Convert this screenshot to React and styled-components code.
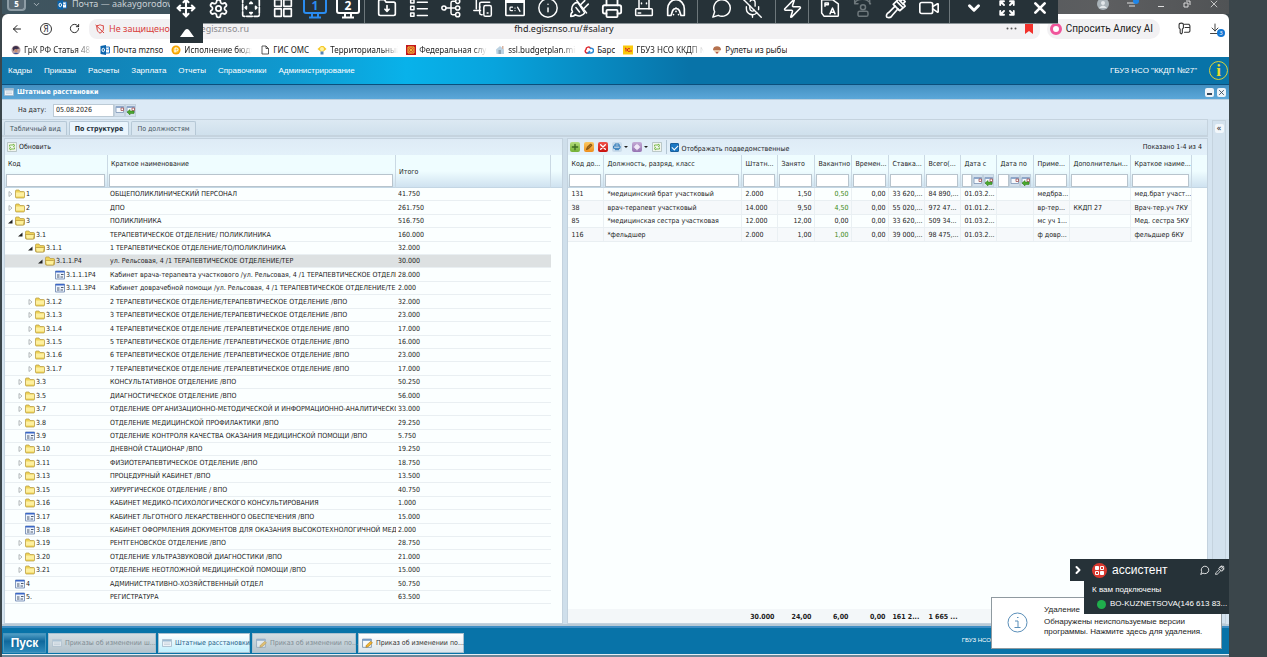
import React from "react";
import styled, { createGlobalStyle, css } from "styled-components";
import {
  LuMove,
  LuSettings,
  LuInfo,
  LuPrinter,
  LuMessageCircle,
  LuMicOff,
  LuZap,
  LuVideo,
  LuArrowLeft,
  LuRotateCw,
  LuChevronDown,
  LuChevronRight,
} from "react-icons/lu";

const ui = '"DejaVu Sans Condensed", "DejaVu Sans", sans-serif';
const arial = '"Liberation Sans", Arial, sans-serif';
const noto = '"Noto Sans", sans-serif';

const bookmarks = [
  { text: "ГрК РФ Статья 48.", kind: "coat" },
  { text: "Почта mznso", kind: "outlook" },
  { text: "Исполнение бюдж", kind: "coin" },
  { text: "ГИС ОМС", kind: "page" },
  { text: "Территориальный", kind: "bulb" },
  { text: "Федеральная служ", kind: "emblem" },
  { text: "ssl.budgetplan.min", kind: "house" },
  { text: "Барс", kind: "cloud" },
  { text: "ГБУЗ НСО ККДП №", kind: "onec" },
  { text: "Рулеты из рыбы", kind: "cook" },
];

const menu = [
  "Кадры",
  "Приказы",
  "Расчеты",
  "Зарплата",
  "Отчеты",
  "Справочники",
  "Администрирование",
];

const tree = [
  { level: 0, kind: "closed", code: "1", name: "ОБЩЕПОЛИКЛИНИЧЕСКИЙ ПЕРСОНАЛ", total: "41.750" },
  { level: 0, kind: "closed", code: "2", name: "ДПО", total: "261.750" },
  { level: 0, kind: "open", code: "3", name: "ПОЛИКЛИНИКА", total: "516.750" },
  { level: 1, kind: "open", code: "3.1", name: "ТЕРАПЕВТИЧЕСКОЕ ОТДЕЛЕНИЕ/ ПОЛИКЛИНИКА", total: "160.000" },
  { level: 2, kind: "open", code: "3.1.1", name: "1 ТЕРАПЕВТИЧЕСКОЕ ОТДЕЛЕНИЕ/ТО/ПОЛИКЛИНИКА", total: "32.000" },
  { level: 3, kind: "open", code: "3.1.1.Р4", name: "ул. Рельсовая, 4 /1 ТЕРАПЕВТИЧЕСКОЕ ОТДЕЛЕНИЕ/ТЕР", total: "30.000", selected: true },
  { level: 4, kind: "leaf", code: "3.1.1.1Р4", name: "Кабинет врача-терапевта участкового /ул. Рельсовая, 4 /1 ТЕРАПЕВТИЧЕСКОЕ ОТДЕЛЕ", total: "28.000" },
  { level: 4, kind: "leaf", code: "3.1.1.3Р4", name: "Кабинет доврачебной помощи /ул. Рельсовая, 4 /1 ТЕРАПЕВТИЧЕСКОЕ ОТДЕЛЕНИЕ/ТЕ", total: "2.000" },
  { level: 2, kind: "closed", code: "3.1.2", name: "2 ТЕРАПЕВТИЧЕСКОЕ ОТДЕЛЕНИЕ/ТЕРАПЕВТИЧЕСКОЕ ОТДЕЛЕНИЕ /ВПО", total: "32.000" },
  { level: 2, kind: "closed", code: "3.1.3", name: "3 ТЕРАПЕВТИЧЕСКОЕ ОТДЕЛЕНИЕ/ТЕРАПЕВТИЧЕСКОЕ ОТДЕЛЕНИЕ /ВПО", total: "23.000" },
  { level: 2, kind: "closed", code: "3.1.4", name: "4 ТЕРАПЕВТИЧЕСКОЕ ОТДЕЛЕНИЕ /ТЕРАПЕВТИЧЕСКОЕ ОТДЕЛЕНИЕ /ВПО", total: "17.000" },
  { level: 2, kind: "closed", code: "3.1.5", name: "5 ТЕРАПЕВТИЧЕСКОЕ ОТДЕЛЕНИЕ /ТЕРАПЕВТИЧЕСКОЕ ОТДЕЛЕНИЕ /ВПО", total: "16.000" },
  { level: 2, kind: "closed", code: "3.1.6", name: "6 ТЕРАПЕВТИЧЕСКОЕ ОТДЕЛЕНИЕ /ТЕРАПЕВТИЧЕСКОЕ ОТДЕЛЕНИЕ /ВПО", total: "23.000" },
  { level: 2, kind: "closed", code: "3.1.7", name: "7 ТЕРАПЕВТИЧЕСКОЕ ОТДЕЛЕНИЕ /ТЕРАПЕВТИЧЕСКОЕ ОТДЕЛЕНИЕ /ВПО", total: "17.000" },
  { level: 1, kind: "closed", code: "3.3", name: "КОНСУЛЬТАТИВНОЕ ОТДЕЛЕНИЕ /ВПО", total: "50.250" },
  { level: 1, kind: "closed", code: "3.5", name: "ДИАГНОСТИЧЕСКОЕ ОТДЕЛЕНИЕ /ВПО", total: "56.000" },
  { level: 1, kind: "closed", code: "3.7", name: "ОТДЕЛЕНИЕ ОРГАНИЗАЦИОННО-МЕТОДИЧЕСКОЙ И ИНФОРМАЦИОННО-АНАЛИТИЧЕСКО", total: "33.000" },
  { level: 1, kind: "closed", code: "3.8", name: "ОТДЕЛЕНИЕ МЕДИЦИНСКОЙ ПРОФИЛАКТИКИ /ВПО", total: "29.250" },
  { level: 1, kind: "leaf", code: "3.9", name: "ОТДЕЛЕНИЕ КОНТРОЛЯ КАЧЕСТВА ОКАЗАНИЯ МЕДИЦИНСКОЙ ПОМОЩИ /ВПО", total: "5.750" },
  { level: 1, kind: "closed", code: "3.10", name: "ДНЕВНОЙ СТАЦИОНАР /ВПО", total: "19.250" },
  { level: 1, kind: "closed", code: "3.11", name: "ФИЗИОТЕРАПЕВТИЧЕСКОЕ ОТДЕЛЕНИЕ /ВПО", total: "18.750" },
  { level: 1, kind: "closed", code: "3.13", name: "ПРОЦЕДУРНЫЙ КАБИНЕТ /ВПО", total: "13.500" },
  { level: 1, kind: "closed", code: "3.15", name: "ХИРУРГИЧЕСКОЕ ОТДЕЛЕНИЕ / ВПО", total: "40.750" },
  { level: 1, kind: "closed", code: "3.16", name: "КАБИНЕТ МЕДИКО-ПСИХОЛОГИЧЕСКОГО КОНСУЛЬТИРОВАНИЯ", total: "1.000" },
  { level: 1, kind: "leaf", code: "3.17", name: "КАБИНЕТ ЛЬГОТНОГО ЛЕКАРСТВЕННОГО ОБЕСПЕЧЕНИЯ /ВПО", total: "15.000" },
  { level: 1, kind: "leaf", code: "3.18", name: "КАБИНЕТ ОФОРМЛЕНИЯ ДОКУМЕНТОВ ДЛЯ ОКАЗАНИЯ ВЫСОКОТЕХНОЛОГИЧНОЙ МЕД", total: "2.000" },
  { level: 1, kind: "closed", code: "3.19", name: "РЕНТГЕНОВСКОЕ ОТДЕЛЕНИЕ /ВПО", total: "28.750" },
  { level: 1, kind: "closed", code: "3.20", name: "ОТДЕЛЕНИЕ УЛЬТРАЗВУКОВОЙ ДИАГНОСТИКИ /ВПО", total: "21.000" },
  { level: 1, kind: "closed", code: "3.21", name: "ОТДЕЛЕНИЕ НЕОТЛОЖНОЙ МЕДИЦИНСКОЙ ПОМОЩИ /ВПО", total: "15.000" },
  { level: 0, kind: "leaf", code: "4", name: "АДМИНИСТРАТИВНО-ХОЗЯЙСТВЕННЫЙ ОТДЕЛ", total: "50.750" },
  { level: 0, kind: "leaf", code: "5.", name: "РЕГИСТРАТУРА", total: "63.500" },
];

const columns = [
  { title: "Код до...", width: 36 },
  { title: "Должность, разряд, класс", width: 138 },
  { title: "Штатн...", width: 36 },
  { title: "Занято", width: 37, right: true },
  { title: "Вакантно", width: 37, right: true },
  { title: "Времен...", width: 37, right: true },
  { title: "Ставка...", width: 36 },
  { title: "Всего(...", width: 36 },
  { title: "Дата с", width: 36, date: true },
  { title: "Дата по", width: 37, date: true },
  { title: "Приме...", width: 36 },
  { title: "Дополнительн...", width: 61 },
  { title: "Краткое наиме...", width: 61 },
];

const staff = [
  ["131", "*медицинский брат участковый", "2.000", "1,50", "0,50", "0,00", "33 620,...", "84 890,...", "01.03.2...", "", "медбра...", "", "мед.брат участ..."],
  ["38", "врач-терапевт участковый", "14.000", "9,50", "4,50", "0,00", "55 020,...", "972 47...", "01.01.2...", "", "вр-тер...", "ККДП 27", "Врач-тер.уч 7КУ"],
  ["85", "*медицинская сестра участковая", "12.000", "12,00", "0,00", "0,00", "33 620,...", "509 34...", "01.03.2...", "", "мс уч 1...", "", "Мед. сестра 5КУ"],
  ["116", "*фельдшер", "2.000", "1,00", "1,00", "0,00", "39 000,...", "98 475,...", "01.03.2...", "", "ф довр...", "", "фельдшер 6КУ"],
];

const totals = ["", "", "30.000", "24,00", "6,00", "0,00", "161 2...", "1 665 ...", "", "", "", "", ""];

const tasks = [
  { text: "Приказы об изменении ш...", state: "dim", icon: "window", width: 108 },
  { text: "Штатные расстановки", state: "active", icon: "window", width: 92 },
  { text: "Приказ об изменении по...", state: "dim", icon: "edit", width: 104 },
  { text: "Приказ об изменении по...", state: "plain", icon: "edit", width: 106 },
];

/* ---------- icons ---------- */

const Stroke = ({ size = 20, color = "#fff", width = 2, children }) => (
  <svg
    width={size}
    height={size}
    viewBox="0 0 24 24"
    fill="none"
    stroke={color}
    strokeWidth={width}
    strokeLinecap="round"
    strokeLinejoin="round"
    aria-hidden="true"
  >
    {children}
  </svg>
);

const FitIcon = () => (
  <Stroke>
    <rect x="2" y="1" width="20" height="21" rx="2" strokeDasharray="7 2" />
    <path d="M10.500 6.500 12 5l1.500 1.500zM10.500 17.500 12 19l1.500-1.500zM6.500 10 5 11.500 6.500 13zM17.500 10l1.500 1.500-1.500 1.500z" />
  </Stroke>
);

const TilesIcon = () => (
  <Stroke>
    <rect x="2" y="2" width="8" height="8" />
    <rect x="13" y="2" width="9" height="8" />
    <rect x="2" y="13" width="8" height="9" />
    <rect x="13" y="13" width="9" height="9" />
  </Stroke>
);

const MonitorIcon = ({ n, color }) => (
  <svg width="24" height="22" viewBox="0 0 24 22" fill="none" stroke={color} strokeWidth="2">
    <rect x="1" y="1" width="22" height="15" rx="2" />
    <path d="M9 16v4M15 16v4M6 20.500h12" />
    <text x="12" y="13" textAnchor="middle" fill={color} stroke="none" fontSize="12" fontWeight="700" fontFamily="Noto Sans">
      {n}
    </text>
  </svg>
);

const FolderDownIcon = () => (
  <Stroke>
    <path d="M2 4a2 2 0 0 1 2-2h5l2 3h9a2 2 0 0 1 2 2v12a2 2 0 0 1-2 2H4a2 2 0 0 1-2-2z" />
    <path d="M12 9v7M9.500 13.500 12 16l2.500-2.500" />
  </Stroke>
);

const ListIcon = () => (
  <Stroke width={1.8}>
    <rect x="2" y="2" width="4" height="4" />
    <rect x="2" y="10" width="4" height="4" />
    <rect x="2" y="18" width="4" height="4" />
    <path d="M10 5h12M10 13h12M10 21h12" />
  </Stroke>
);

const TreeIcon = () => (
  <Stroke width={1.8}>
    <circle cx="3.500" cy="12" r="2.500" />
    <circle cx="20" cy="4" r="2.500" />
    <circle cx="20" cy="12" r="2.500" />
    <circle cx="20" cy="20" r="2.500" />
    <path d="M6 12h11M17 4h-3a2 2 0 0 0-2 2v12a2 2 0 0 0 2 2h3" />
  </Stroke>
);

const DevicesIcon = () => (
  <Stroke width={1.8}>
    <path d="M4 2v11M1 15h8" />
    <path d="M8 12V7a2 2 0 0 1 2-2h10" />
    <rect x="13" y="9" width="9" height="13" rx="2" />
    <path d="M8 10v8a2 2 0 0 0 2 2h1M17 18h1" />
  </Stroke>
);

const ConsoleIcon = () => (
  <Stroke>
    <rect x="1" y="2" width="22" height="19" rx="1" />
    <path d="M1 4h22" strokeWidth="4" />
    <path d="M9 11H7a1 1 0 0 0-1 1v2a1 1 0 0 0 1 1h2M12 12v.1M12 15v.1M15 11l3 5" strokeWidth="1.500" />
  </Stroke>
);

const PlugIcon = () => (
  <Stroke width={1.8} size={21}>
    <path d="M10 5c-4 0-7 4-7 8 0 1 1 2 1 3-2 1-2 3-2 5 2 0 4 0 5-2 4 3 9 1 11-2z" />
    <path d="m9 3 11 14M13 8l5-5M17 12l5-5M8 11l4 5" />
  </Stroke>
);

const UsbIcon = () => (
  <Stroke width={1.8}>
    <path d="M6 13V1h12v12M9 6v1M15 6v1" />
    <rect x="2" y="13" width="20" height="8" rx="1" />
    <path d="M5 18h3" />
  </Stroke>
);

const ArchIcon = () => (
  <Stroke>
    <path d="M2 21V13a10 11 0 0 1 20 0v8h-4l-2-6a4.500 4.500 0 0 0-8 0l-2 6z" />
    <path d="M12 12v.1M12 16v.1M9 20v.1M15 20v.1" />
  </Stroke>
);

const TranslateIcon = () => (
  <Stroke width={1.8}>
    <path d="M2 3a1 1 0 0 1 1-1h12l7 5v14a1 1 0 0 1-1 1H5l-3-4z" />
    <path d="M6 10V6h4v2H6M12 19l3-7 3 7M13 17h4" />
  </Stroke>
);

const UserTurnIcon = () => (
  <Stroke color="#6d777b" width={1.8}>
    <circle cx="12" cy="11" r="3" />
    <rect x="6" y="16" width="12" height="6" rx="2" />
    <path d="M2 3v4h4M2 6c4-6 15-6 19 1M20 3v4" />
  </Stroke>
);

const ToolsIcon = ({ size = 22 }) => (
  <Stroke size={size} width={1.8}>
    <path d="M2 22c-1-2 0-4 2-5l7-7-2-2 6-6 3 2 1-2 3 3-2 2 2 3-6 5-2-2-6 7c-1 2-3 3-6 2z" />
    <path d="m11 10 4 4M13 5l6 6M15 3l5 5" />
  </Stroke>
);

const ExpandIcon = () => (
  <Stroke size={18} width={2.5}>
    <path d="M3 8V3h5M3 3l5 5M21 8V3h-5M21 3l-5 5M3 16v5h5M3 21l5-5M21 16v5h-5M21 21l-5-5" />
  </Stroke>
);

const CrossIcon = ({ size = 16, color = "#fff", width = 4 }) => (
  <Stroke size={size} color={color} width={width}>
    <path d="m5 5 14 14M19 5 5 19" />
  </Stroke>
);

const Folder = ({ open }) => (
  <svg width="10" height="10" viewBox="0 0 20 20" aria-hidden="true">
    <path d="M1 4q0-2 2-2h5l2 3h7q2 0 2 2v9q0 2-2 2H3q-2 0-2-2z" fill="#f0d458" stroke="#b5983e" strokeWidth="1.400" />
    {open ? (
      <path d="M1 9h15l3-1-2 9q0 1-2 1H4q-2 0-2-2z" fill="#fdf09a" stroke="#a8862a" strokeWidth="1.200" />
    ) : (
      <path d="M2 7h16v8H2z" fill="#fdf0a0" />
    )}
  </svg>
);

const Leaf = () => (
  <svg width="10" height="10" viewBox="0 0 20 20" aria-hidden="true">
    <path d="M1 2h18v16H1z" fill="#eef4fc" stroke="#8399bd" strokeWidth="2" />
    <path d="M1 2h18v3H1z" fill="#3c68c8" />
    <path d="M4 10h5M4 14h5M12 9h5M11 14h5" stroke="#4a5a70" strokeWidth="2" />
  </svg>
);

const Calendar = ({ back }) => (
  <svg width="10" height="10" viewBox="0 0 20 20" aria-hidden="true">
    <path d="M2 3h15v12H2z" fill="#f6f9fd" stroke="#7b94b5" strokeWidth="1.600" />
    <path d="M2 3h15v3H2z" fill="#8ea9cc" />
    <path d="M12 6h5v5h-5z" fill="#fff" stroke="#a04848" strokeWidth="1.500" />
    {back && <path d="m2 14 6-5v3h8v5H8v3z" fill="#4ba82e" stroke="#2f7a18" />}
  </svg>
);

const Refresh = () => (
  <svg width="10" height="10" viewBox="0 0 20 20" fill="none" aria-hidden="true">
    <path d="M1 1h18v18H1z" fill="#f1f5ee" stroke="#aab8b8" strokeWidth="1.500" />
    <path d="M5 9V6h8l-1-2 4 3-4 3M15 11v3H7l1 2-4-3 4-3" stroke="#7cbb4e" strokeWidth="2" />
  </svg>
);

const WindowIcon = () => (
  <svg width="10" height="10" viewBox="0 0 20 20" aria-hidden="true">
    <path d="M1 3h18v14H1z" fill="#eef3f8" stroke="#9fb4c6" strokeWidth="1.500" />
    <path d="M2 4h16v3H2z" fill="#9dbad2" />
    <path d="M4 10h12M4 13h12" stroke="#c3cfd9" strokeWidth="1.500" />
  </svg>
);

const EditIcon = () => (
  <svg width="11" height="11" viewBox="0 0 20 20" aria-hidden="true">
    <path d="M1 2h16v15H1z" fill="#f7fafc" stroke="#7590ad" strokeWidth="1.500" />
    <path d="M1 2h16v3H1z" fill="#6c93c2" />
    <path d="m7 17 1-4 8-7 3 3-8 7z" fill="#f2b632" stroke="#a36f12" />
  </svg>
);

const Favicon = ({ kind }) => (
  <svg width="10" height="10" viewBox="0 0 20 20" aria-hidden="true">
    {kind === "coat" && (
      <>
        <circle cx="10" cy="10" r="9" fill="#b9a0a4" />
        <path d="M3 7c3-7 12-6 14 1l-3-1-3 3-3-2-3 4z" fill="#3b2f4a" />
        <circle cx="10" cy="11" r="3" fill="#c98c6a" />
        <path d="M5 18q5-5 10 0z" fill="#38529b" />
      </>
    )}
    {kind === "outlook" && (
      <>
        <path d="M10 4h9v12h-9z" fill="#fff" stroke="#1f72c0" strokeWidth="2" />
        <path d="m10 6 5 4 4-4" fill="none" stroke="#1f72c0" strokeWidth="1.500" />
        <path d="M1 2 12 0v20L1 18z" fill="#0a64ad" />
        <ellipse cx="6.500" cy="10" rx="2.500" ry="3.500" fill="none" stroke="#fff" strokeWidth="2" />
      </>
    )}
    {kind === "coin" && (
      <>
        <circle cx="10" cy="10" r="9" fill="#f5a300" />
        <circle cx="10" cy="10" r="6" fill="#ffc42e" />
        <path d="M8 15V6h3a3 3 0 0 1 0 6H7" fill="none" stroke="#fff" strokeWidth="2" />
      </>
    )}
    {kind === "page" && (
      <path d="M4 2h8l5 5v11H4zM12 2v5h5" fill="none" stroke="#333" strokeWidth="1.600" />
    )}
    {kind === "bulb" && (
      <>
        <path d="M1 8 8 2h5l6 6-6 5H7z" fill="#f6c929" />
        <circle cx="10" cy="8" r="4" fill="#fff2a0" />
        <path d="M7 13h6v6H7z" fill="#5582b5" />
      </>
    )}
    {kind === "emblem" && (
      <>
        <path d="M0 0h20v20H0z" fill="#c3161c" />
        <path d="M4 4h12v12H4z" fill="none" stroke="#f5c93c" strokeWidth="2" />
        <path d="M10 3v14M4 10h12M6 6l8 8M14 6l-8 8" stroke="#f5c93c" strokeWidth="1.500" />
      </>
    )}
    {kind === "house" && (
      <>
        <path d="m2 9 8-7 8 7v9H3z" fill="#bcd2e2" />
        <path d="M7 10h5v8H7z" fill="#8fa4b4" />
        <path d="M14 2h3v6h-3z" fill="#d8b2a0" />
      </>
    )}
    {kind === "cloud" && (
      <>
        <path d="M10 16H5a4 4 0 0 1-1-7c0-5 7-7 9-2" fill="none" stroke="#e0282e" strokeWidth="3" />
        <path d="M12 7c4-2 7 1 7 4s-2 5-5 5H8l4-4" fill="none" stroke="#2b8ad6" strokeWidth="3" />
      </>
    )}
    {kind === "onec" && (
      <>
        <path d="M0 1h20v18H0z" fill="#fbc90d" />
        <path d="m4 7 2-1v7M14 8a3 3 0 1 0 0 4h4" fill="none" stroke="#d6281e" strokeWidth="2" />
      </>
    )}
    {kind === "cook" && (
      <>
        <path d="M2 9c0-9 16-9 16 0 0 2-3 2-4 2H5c-2 0-3-1-3-2z" fill="#b5714e" />
        <path d="M5 10h10v4q-5 7-10 0z" fill="#e9c8a8" />
        <path d="M8 15q2 2 4 0" stroke="#a5322c" fill="none" strokeWidth="2" />
      </>
    )}
  </svg>
);

/* ---------- page ---------- */

const GlobalStyle = createGlobalStyle`
  * {
    box-sizing: border-box;
  }
  body {
    margin: 0;
    background: #3b464b;
    overflow: hidden;
  }
  button, input {
    margin: 0;
    padding: 0;
    border: 0;
    background: none;
    color: inherit;
    font: inherit;
  }
  a {
    color: inherit;
    text-decoration: none;
  }
  svg {
    display: block;
    flex: none;
  }
`;

const Screen = styled.div`
  position: relative;
  display: flex;
  flex-direction: column;
  min-height: 100vh;
  padding: 0 38px 0 2px;
  background: #3b464b;
  font-family: ${ui};
  font-size: 7px;
  line-height: 12px;
  color: #1c1c1c;
`;

const TitleStrip = styled.div`
  display: flex;
  align-items: flex-start;
  height: 14px;
  overflow: hidden;
  background: linear-gradient(90deg, #3f5560, #3c4a52 50%, #5d5e60 90%, #505355);
  color: #c9d1d5;
  font-family: ${noto};
  font-size: 9px;
  line-height: 8px;
`;

const TabCount = styled.span`
  width: 19px;
  height: 11px;
  margin-left: 5px;
  border-radius: 0 0 4px 4px;
  border: 2px solid #8d9ca5;
  border-top: 0;
  background: #596a75;
  color: #fff;
  font-weight: 700;
  font-size: 8px;
  line-height: 7px;
  text-align: center;
`;

const TabTitle = styled.span`
  display: flex;
  gap: 5px;
  margin-left: 16px;
`;

const TabArrow = styled.span`
  margin-left: 6px;
  height: 8px;
`;

const WindowButtons = styled.div`
  display: flex;
  align-items: center;
  gap: 18px;
  height: 8px;
  margin-left: auto;
  padding-right: 10px;
`;

const AddressRow = styled.div`
  display: flex;
  align-items: center;
  height: 29px;
  padding: 0 8px 0 9px;
  border-radius: 6px 6px 0 0;
  background: #fff;
  font-family: ${noto};
  font-size: 9px;
`;

const NavButtons = styled.div`
  display: flex;
  align-items: center;
  justify-content: space-between;
  width: 69px;
  margin-right: 9px;
`;

const RoundLetter = styled.span`
  display: grid;
  place-items: center;
  width: 12px;
  height: 12px;
  border: 1px solid #333;
  border-radius: 50%;
  font-size: 8px;
  line-height: 8px;
`;

const AddressPill = styled.div`
  flex: 1;
  display: grid;
  grid-template-columns: 1fr auto 1fr;
  align-items: center;
  height: 20px;
  padding: 0 7px 0 6px;
  border-radius: 8px;
  background: #f2f1f3;
`;

const Insecure = styled.div`
  display: flex;
  align-items: center;
  gap: 4px;
  color: #d9413d;
`;

const Domain = styled.span`
  margin-left: 10px;
  color: #8a8a8e;
`;

const PillEnd = styled.div`
  display: flex;
  align-items: center;
  justify-content: flex-end;
  gap: 8px;
`;

const AliceButton = styled.button`
  display: flex;
  align-items: center;
  gap: 4px;
  height: 20px;
  margin: 0 18px 0 7px;
  padding: 0 7px 0 3px;
  border-radius: 10px;
  background: #f2f1f3;
  font-family: Roboto, sans-serif;
  font-size: 10px;
`;

const Ring = styled.span`
  width: 12px;
  height: 12px;
  border: 3px solid #f0559b;
  border-radius: 50%;
  background: #fff;
`;

const Download = styled.div`
  position: relative;
  margin-left: 18px;
`;

const Badge = styled.span`
  position: absolute;
  right: -4px;
  bottom: -2px;
  width: 8px;
  height: 8px;
  border-radius: 50%;
  background: #1376d3;
  color: #fff;
  font-size: 6px;
  line-height: 8px;
  text-align: center;
`;

const Bookmarks = styled.nav`
  display: flex;
  gap: 8px;
  height: 14px;
  padding-left: 9px;
  background: #fff;
  font-family: ${noto};
  font-size: 8px;
  line-height: 14px;
`;

const Bookmark = styled.a`
  display: flex;
  align-items: center;
  gap: 3px;
  white-space: nowrap;
  & > span {
    max-width: 68px;
    overflow: hidden;
    ${({ $fade }) => $fade && "mask-image: linear-gradient(90deg, #000 54px, transparent 68px);"}
  }
`;

const AppHeader = styled.header`
  display: flex;
  align-items: center;
  height: 28px;
  padding: 0 1px 0 6px;
  border-bottom: 1px solid #0b4f7c;
  background: linear-gradient(90deg, #1378ab, #0f9ad0 24%, #08b2ea 33%, #08a4dd 40%, #0873a8 56%, #0873a8);
  color: #fff;
  font-family: ${arial};
  font-size: 8px;
`;

const Menu = styled.nav`
  display: flex;
  gap: 12px;
`;

const OrgName = styled.span`
  margin-left: auto;
`;

const InfoMark = styled.button`
  width: 19px;
  height: 19px;
  margin-left: 12px;
  border: 1px solid #d8d23c;
  border-radius: 50%;
  color: #e9dc2e;
  font: 700 17px/16px "Liberation Serif", serif;
`;

const WindowBar = styled.div`
  display: flex;
  align-items: center;
  gap: 3px;
  height: 15px;
  padding: 0 3px 0 2px;
  border-bottom: 1px solid #b9cfe0;
  background: linear-gradient(#4390c1, #5ba7d9);
  color: #fff;
  font-weight: 700;
`;

const WindowTool = styled.button`
  display: grid;
  place-items: center;
  width: 9px;
  height: 9px;
  border-radius: 2px;
  background: #edf3f8;
  color: #33475a;
  &:first-of-type {
    margin-left: auto;
  }
`;

const DateBar = styled.div`
  display: flex;
  align-items: center;
  height: 19px;
  padding: 1px 0 0 16px;
  background: #dceaf6;
`;

const DateLabel = styled.label`
  width: 30px;
`;

const DateInput = styled.input`
  width: 61px;
  height: 13px;
  margin-left: 5px;
  padding-left: 2px;
  border: 1px solid #bccad5;
  background: #fff;
`;

const IconButton = styled.button`
  display: grid;
  place-items: center;
  width: 11px;
  height: 13px;
  background: #d3e0ec;
  border: 1px solid #c1d0dd;
`;

const Workspace = styled.main`
  flex: 1;
  display: flex;
  background: #d5e4f0;
  border-bottom: 2px solid #b9cad6;
`;

const Center = styled.div`
  flex: 1;
  min-width: 0;
  display: flex;
  flex-direction: column;
`;

const Tabs = styled.div`
  display: flex;
  align-items: flex-end;
  gap: 2px;
  height: 18px;
  padding-left: 2px;
  border: solid #c5d3de;
  border-width: 1px 1px 2px 0;
  background: linear-gradient(#dce9f3, #cfe0ec);
`;

const Tab = styled.button`
  height: 14px;
  padding: 0 5px;
  border: 1px solid #b6c8d6;
  border-bottom: 0;
  border-radius: 2px 2px 0 0;
  background: #d9e6f0;
  color: #46555f;
  ${({ $on }) =>
    $on &&
    css`
      background: #eaf5fd;
      color: #22303a;
      font-weight: 700;
    `}
`;

const Panels = styled.div`
  flex: 1;
  display: grid;
  grid-template-columns: minmax(0, 559fr) 4px minmax(0, 640fr);
  padding: 1px 0 0 2px;
`;

const Panel = styled.section`
  display: flex;
  flex-direction: column;
  border: 1px solid #c3d2de;
  background: #fbffff;
`;

const Splitter = styled.div`
  background: #cfdfeb;
`;

const PanelBar = styled.div`
  display: flex;
  align-items: center;
  gap: 4px;
  height: 16px;
  padding: 0 5px 0 2px;
  background: linear-gradient(#deebf6, #e3f1fa);
`;

const TextButton = styled.button`
  display: flex;
  align-items: center;
  gap: 2px;
`;

const ToolButton = styled.button`
  display: flex;
  align-items: center;
  gap: 2px;
  & > span {
    display: grid;
    place-items: center;
    width: 10px;
    height: 10px;
    border-radius: 2px;
    background: ${({ $bg }) => $bg};
  }
  & > i {
    border: 2px solid transparent;
    border-top-color: #222;
    border-bottom: 0;
  }
`;

const CheckLabel = styled.label`
  display: flex;
  align-items: center;
  gap: 2px;
  padding-left: 3px;
  border-left: 1px solid #b4c6d4;
  line-height: 10px;
  & > span {
    padding-top: 4px;
  }
`;

const Check = styled.input`
  appearance: none;
  width: 9px;
  height: 9px;
  border: 1px solid #1a5f9c;
  border-radius: 1px;
  background: #1b78c4;
  &::after {
    content: "";
    display: block;
    width: 3px;
    height: 5px;
    margin: 0 auto;
    border: solid #fff;
    border-width: 0 1px 1px 0;
    transform: rotate(45deg);
  }
`;

const Counter = styled.span`
  margin-left: auto;
`;

const Table = styled.table`
  width: 100%;
  table-layout: fixed;
  border-collapse: separate;
  border-spacing: 0;
`;

const Th = styled.th`
  height: 33px;
  padding: ${({ $plain }) => ($plain ? "2px 3px 0" : "2px 2px 0 1px")};
  border-right: 1px solid #cad9e4;
  border-bottom: 1px solid #c3d6e4;
  background: linear-gradient(#effdff 50%, #cfe2f0);
  font-weight: 400;
  text-align: left;
  vertical-align: ${({ $plain }) => ($plain ? "middle" : "top")};
  overflow: hidden;
  white-space: nowrap;
  &:last-child {
    border-right: 0;
  }
`;

const ThLabel = styled.span`
  display: block;
  height: 17px;
  padding-left: 2px;
  line-height: 14px;
`;

const Filter = styled.span`
  display: flex;
  & > input {
    flex: 1;
    min-width: 0;
    height: 13px;
    border: 1px solid #b8c4cd;
    background: #fff;
  }
`;

const Row = styled.tr`
  & > td {
    height: 13px;
    padding: 0 0 0 2px;
    border-bottom: 1px solid #e9eff2;
    background: ${({ $selected }) => ($selected ? "#dde1e2" : "#fbffff")};
    overflow: hidden;
    white-space: nowrap;
  }
  &:nth-child(7n + 2) > td,
  &:nth-child(7n + 4) > td,
  &:nth-child(7n) > td {
    height: 14px;
  }
`;

const StaffRow = styled(Row)`
  & > td {
    padding: 0 3px;
    border-right: 1px solid #eaf0f3;
  }
  &:nth-child(even) > td {
    background: #f6f9fb;
  }
  & > td:last-child {
    border-right: 0;
    border-bottom-color: #fbffff;
    background: #fbffff;
  }
`;

const Cell = styled.td`
  text-align: ${({ $right }) => ($right ? "right" : "left")};
  color: ${({ $green }) => ($green ? "#3c8a17" : "inherit")};
`;

const Node = styled.span`
  display: flex;
  align-items: center;
  height: 12px;
  padding-left: ${({ $level }) => $level * 10}px;
`;

const Toggle = styled.span`
  display: grid;
  place-items: center;
  width: 7px;
  margin-right: 1px;
`;

const NodeCode = styled.span`
  padding-left: 1px;
`;

const Totals = styled.div`
  margin-top: auto;
  background: #f3f7f9;
  font-weight: 700;
  & td {
    height: 14px;
    padding: 2px 4px 0 3px;
    line-height: 10px;
    overflow: hidden;
    white-space: nowrap;
  }
`;

const SideStrip = styled.aside`
  display: flex;
  justify-content: center;
  align-items: flex-start;
  width: 14px;
  margin: 1px 3px 0 4px;
  padding-top: 3px;
  border: 1px solid #c5d3de;
  background: #d3e2ee;
`;

const CollapseButton = styled.button`
  width: 9px;
  height: 9px;
  border-radius: 2px;
  background: #f2f7fb;
  font-size: 9px;
  line-height: 7px;
`;

const TaskBar = styled.footer`
  display: flex;
  gap: 2px;
  height: 28px;
  padding: 5px 2px 1px 1px;
  border-top: 2px solid #3c8dc4;
  background: #0873a8;
`;

const StartButton = styled.button`
  width: 43px;
  background: linear-gradient(#4f9dc4, #0f689c 40%, #2d8abb);
  border: 1px solid #4795bd;
  color: #fff;
  font: 700 12px/18px ${arial};
`;

const Task = styled.button`
  display: flex;
  align-items: center;
  gap: 3px;
  width: ${({ $width }) => $width}px;
  padding: 0 2px 0 3px;
  border: 1px solid #a9c0cf;
  white-space: nowrap;
  ${({ $state }) =>
    $state === "dim" &&
    css`
      background: linear-gradient(#d4dde2, #b5c4cd);
      color: #7f8c94;
      & > svg {
        opacity: 0.6;
      }
    `}
  ${({ $state }) =>
    $state === "active" &&
    css`
      background: linear-gradient(#fff, #bfeffd);
      color: #1f6088;
    `}
  ${({ $state }) =>
    $state === "plain" &&
    css`
      background: linear-gradient(#fff, #dde6ec);
      color: #333;
    `}
`;

const TaskOrg = styled.span`
  margin: 0 236px 0 auto;
  color: #fff;
  font: 6px/14px ${arial};
`;

const BottomEdge = styled.div`
  height: 3px;
  border-top: 1px solid #e6eef3;
  background: #6d8798;
`;

/* ---------- remote control overlays ---------- */

const RemoteBar = styled.div`
  position: absolute;
  top: 0;
  left: 170px;
  display: flex;
  height: 24px;
  border-bottom: 1px solid #8b9397;
  background: #263238;
`;

const RemoteGroup = styled.div`
  display: flex;
  align-items: flex-start;
  width: ${({ $width }) => $width}px;
  height: 23px;
  padding: ${({ $pad }) => $pad || "0"};
  border-right: 1px solid #6d777b;
  &:last-child {
    border-right: 0;
  }
`;

const RemoteButton = styled.button`
  flex: 1;
  display: flex;
  align-items: center;
  justify-content: center;
  height: 16px;
  color: #fff;
`;

const RemoteTab = styled.button`
  position: absolute;
  top: 23px;
  left: 170px;
  display: grid;
  place-items: center;
  width: 33px;
  height: 20px;
  background: #263238;
`;

const Toast = styled.div`
  position: absolute;
  right: 45px;
  bottom: 8px;
  display: flex;
  gap: 16px;
  width: 231px;
  height: 52px;
  padding: 7px 0 0 15px;
  border: 1px solid #8f9aa0;
  background: #fff;
  font: 8px/10px ${arial};
  & p {
    margin: 2px 0 0;
  }
  & svg {
    margin-top: 7px;
  }
`;

const Assistant = styled.aside`
  position: absolute;
  right: 38px;
  bottom: 43px;
  width: 159px;
  font-family: ${arial};
  font-size: 8px;
  color: #fff;
`;

const AssistantHead = styled.div`
  display: flex;
  align-items: center;
  gap: 5px;
  height: 22px;
  padding: 0 4px 0 2px;
  background: #263238;
  & > strong {
    flex: 1;
    font-size: 12px;
    font-weight: 400;
  }
`;

const AssistantLogo = styled.span`
  display: grid;
  place-items: center;
  width: 15px;
  height: 15px;
  margin-left: 3px;
  border-radius: 50%;
  background: #d8392f;
`;

const AssistantBody = styled.div`
  height: 33px;
  margin-left: 14px;
  padding: 2px 0 0 8px;
  background: #263238;
  line-height: 14px;
`;

const Peer = styled.div`
  display: flex;
  align-items: center;
  gap: 4px;
  padding-left: 5px;
  white-space: nowrap;
  &::before {
    content: "";
    width: 9px;
    height: 9px;
    border-radius: 50%;
    background: #1fae4c;
  }
`;

const TreeNode = ({ item }) => (
  <Node $level={item.level}>
    <Toggle>
      {item.kind === "closed" && (
        <svg width="5" height="6" viewBox="0 0 10 12">
          <path d="m2 1 6 5-6 5z" fill="#fff" stroke="#9aa0a4" strokeWidth="1.500" />
        </svg>
      )}
      {item.kind === "open" && (
        <svg width="5" height="5" viewBox="0 0 10 10">
          <path d="M9 1v8H0z" fill="#222" />
        </svg>
      )}
    </Toggle>
    {item.kind === "leaf" ? <Leaf /> : <Folder open={item.kind === "open"} />}
    <NodeCode>{item.code}</NodeCode>
  </Node>
);

const StaffCols = () => (
  <colgroup>
    {columns.map((col) => (
      <col key={col.title} style={{ width: col.width }} />
    ))}
    <col />
  </colgroup>
);

const Remote = () => (
  <>
    <RemoteBar>
      <RemoteGroup $width={195}>
        <RemoteButton aria-label="Переместить"><LuMove size={20} strokeWidth={2.5} /></RemoteButton>
        <RemoteButton aria-label="Настройки"><LuSettings size={21} /></RemoteButton>
        <RemoteButton aria-label="По размеру"><FitIcon /></RemoteButton>
        <RemoteButton aria-label="Плитка"><TilesIcon /></RemoteButton>
        <RemoteButton aria-label="Монитор 1"><MonitorIcon n="1" color="#2a8cf0" /></RemoteButton>
        <RemoteButton aria-label="Монитор 2"><MonitorIcon n="2" color="#fff" /></RemoteButton>
      </RemoteGroup>
      <RemoteGroup $width={333} $pad="0 5px 0 6px">
        <RemoteButton aria-label="Файлы"><FolderDownIcon /></RemoteButton>
        <RemoteButton aria-label="Список"><ListIcon /></RemoteButton>
        <RemoteButton aria-label="Сеть"><TreeIcon /></RemoteButton>
        <RemoteButton aria-label="Устройства"><DevicesIcon /></RemoteButton>
        <RemoteButton aria-label="Консоль"><ConsoleIcon /></RemoteButton>
        <RemoteButton aria-label="Сведения"><LuInfo size={22} strokeWidth={1.6} /></RemoteButton>
        <RemoteButton aria-label="Подключение"><PlugIcon /></RemoteButton>
        <RemoteButton aria-label="Печать"><LuPrinter size={22} /></RemoteButton>
        <RemoteButton aria-label="USB"><UsbIcon /></RemoteButton>
        <RemoteButton aria-label="Туннель"><ArchIcon /></RemoteButton>
      </RemoteGroup>
      <RemoteGroup $width={78} $pad="0 7px 0 8px">
        <RemoteButton aria-label="Чат"><LuMessageCircle size={22} strokeWidth={1.6} /></RemoteButton>
        <RemoteButton aria-label="Микрофон"><LuMicOff size={21} strokeWidth={1.6} /></RemoteButton>
      </RemoteGroup>
      <RemoteGroup $width={33}>
        <RemoteButton aria-label="Действия"><LuZap size={21} strokeWidth={1.8} /></RemoteButton>
      </RemoteGroup>
      <RemoteGroup $width={141} $pad="0 4px">
        <RemoteButton aria-label="Перевод"><TranslateIcon /></RemoteButton>
        <RemoteButton aria-label="Сменить сторону"><UserTurnIcon /></RemoteButton>
        <RemoteButton aria-label="Инструменты"><ToolsIcon /></RemoteButton>
        <RemoteButton aria-label="Запись"><LuVideo size={22} strokeWidth={1.8} /></RemoteButton>
      </RemoteGroup>
      <RemoteGroup $width={108} $pad="0 2px 0 8px">
        <RemoteButton aria-label="Ещё"><LuChevronDown size={18} strokeWidth={4} /></RemoteButton>
        <RemoteButton aria-label="Во весь экран"><ExpandIcon /></RemoteButton>
        <RemoteButton aria-label="Закрыть сеанс"><CrossIcon /></RemoteButton>
      </RemoteGroup>
    </RemoteBar>
    <RemoteTab aria-label="Свернуть панель">
      <svg width="14" height="8" viewBox="0 0 14 8">
        <path d="M0 8 5 1q2-2 4 0l5 7z" fill="#fff" />
      </svg>
    </RemoteTab>
  </>
);

const App = () => {
  return (
    <Screen>
      <GlobalStyle />
      <TitleStrip>
        <TabCount>5</TabCount>
        <TabArrow><LuChevronDown size={9} /></TabArrow>
        <TabTitle>
          <Favicon kind="outlook" />
          Почта — aakaygorodova@
        </TabTitle>
        <WindowButtons>
          <svg width="12" height="12" viewBox="0 0 12 12">
            <circle cx="6" cy="6" r="6" fill="#a9b2b8" />
            <circle cx="6" cy="5" r="2" fill="#e3e7ea" />
            <path d="M2 10q4-5 8 0z" fill="#e3e7ea" />
          </svg>
          <svg width="12" height="8" viewBox="0 0 12 8">
            <path d="M0 3h8M2 6h6" stroke="#ddd" />
            <circle cx="9" cy="1" r="3" fill="#1f86e8" />
          </svg>
          <svg width="8" height="8" viewBox="0 0 8 8"><path d="M1 6.500h6" stroke="#ddd" /></svg>
          <svg width="8" height="8" viewBox="0 0 8 8" fill="none" stroke="#ddd">
            <path d="M1 3h4v4H1zM3 1h4v4" />
          </svg>
          <CrossIcon size={10} color="#ddd" width={2} />
        </WindowButtons>
      </TitleStrip>
      <AddressRow>
        <NavButtons>
          <LuArrowLeft size={12} />
          <RoundLetter>Я</RoundLetter>
          <LuRotateCw size={11} />
        </NavButtons>
        <AddressPill>
          <Insecure>
            <Stroke size={10} color="#d9413d" width={2.4}>
              <path d="M5 4c4 0 6-2 7-2s4 2 8 2v9c0 4-5 7-8 9-4-2-7-6-7-9zM2 3l19 18" />
            </Stroke>
            Не защищено
            <Domain>fhd.egisznso.ru</Domain>
          </Insecure>
          <span>fhd.egisznso.ru/#salary</span>
          <PillEnd>
            <svg width="11" height="3" viewBox="0 0 11 3" fill="#555">
              <circle cx="1.500" cy="1.500" r="1" />
              <circle cx="5.500" cy="1.500" r="1" />
              <circle cx="9.500" cy="1.500" r="1" />
            </svg>
            <svg width="8" height="10" viewBox="0 0 8 10"><path d="M0 0h8v10L4 7l-4 3z" fill="#f2302b" /></svg>
          </PillEnd>
        </AddressPill>
        <AliceButton>
          <Ring />
          Спросить Алису AI
        </AliceButton>
        <Stroke size={13} color="#333">
          <path d="M2 5c0-4 8-4 8 0v6l-2 2v7l-2 2-2-2v-7l-2-2zM12 4h8l2 3v10l-2 2h-8M13 10h9" />
        </Stroke>
        <Download>
          <Stroke size={12} color="#444"><path d="M12 2v14M6 10l6 6 6-6M3 21h18" /></Stroke>
          <Badge>3</Badge>
        </Download>
      </AddressRow>
      <Bookmarks>
        {bookmarks.map((item) => (
          <Bookmark href="#" key={item.text} $fade={item.text.length > 14}>
            <Favicon kind={item.kind} />
            <span>{item.text}</span>
          </Bookmark>
        ))}
      </Bookmarks>
      <AppHeader>
        <Menu>
          {menu.map((item) => (
            <a href="#" key={item}>{item}</a>
          ))}
        </Menu>
        <OrgName>ГБУЗ НСО "ККДП №27"</OrgName>
        <InfoMark>i</InfoMark>
      </AppHeader>
      <WindowBar>
        <WindowIcon />
        Штатные расстановки
        <WindowTool aria-label="Свернуть">
          <svg width="5" height="5" viewBox="0 0 5 5"><path d="M0 4h5" stroke="#33475a" strokeWidth="2" /></svg>
        </WindowTool>
        <WindowTool aria-label="Закрыть"><CrossIcon size={7} color="#33475a" width={3} /></WindowTool>
      </WindowBar>
      <DateBar>
        <DateLabel htmlFor="date">На дату:</DateLabel>
        <DateInput id="date" defaultValue="05.08.2026" />
        <IconButton aria-label="Календарь"><Calendar /></IconButton>
        <IconButton aria-label="Сегодня"><Calendar back /></IconButton>
      </DateBar>
      <Workspace>
        <Center>
          <Tabs>
            <Tab>Табличный вид</Tab>
            <Tab $on>По структуре</Tab>
            <Tab>По должностям</Tab>
          </Tabs>
          <Panels>
            <Panel>
              <PanelBar>
                <TextButton><Refresh />Обновить</TextButton>
              </PanelBar>
              <Table>
                <colgroup>
                  <col style={{ width: 103 }} />
                  <col style={{ width: 288 }} />
                  <col style={{ width: 155 }} />
                  <col />
                </colgroup>
                <thead>
                  <tr>
                    <Th>
                      <ThLabel>Код</ThLabel>
                      <Filter><input aria-label="Код" /></Filter>
                    </Th>
                    <Th>
                      <ThLabel>Краткое наименование</ThLabel>
                      <Filter><input aria-label="Краткое наименование" /></Filter>
                    </Th>
                    <Th $plain>Итого</Th>
                    <Th $plain />
                  </tr>
                </thead>
                <tbody>
                  {tree.map((item) => (
                    <Row key={item.code} $selected={item.selected}>
                      <td><TreeNode item={item} /></td>
                      <td>{item.name}</td>
                      <td>{item.total}</td>
                    </Row>
                  ))}
                </tbody>
              </Table>
            </Panel>
            <Splitter />
            <Panel>
              <PanelBar>
                <ToolButton $bg="linear-gradient(#b4dc7c, #74b236)" aria-label="Добавить">
                  <span><Stroke size={8} color="#3c6a20" width={4}><path d="M12 4v16M4 12h16" /></Stroke></span>
                </ToolButton>
                <ToolButton $bg="linear-gradient(#fbc964, #ee8f1c)" aria-label="Изменить">
                  <span><Stroke size={8} color="#8a5a18" width={4}><path d="m5 19 3-7 9-8 3 3-9 9z" /></Stroke></span>
                </ToolButton>
                <ToolButton $bg="linear-gradient(#f0524a, #c8110c)" aria-label="Удалить">
                  <span><CrossIcon size={8} /></span>
                </ToolButton>
                <ToolButton $bg="#c9dbea" aria-label="Печать">
                  <span><Stroke size={8} color="#2c79b8" width={3}><path d="M6 8V3h12v5M3 9h18v7H3zM7 20h10" /></Stroke></span>
                  <i />
                </ToolButton>
                <ToolButton $bg="linear-gradient(#c4abd6, #9673b2)" aria-label="Операции">
                  <span><Stroke size={8} width={4} color="#f1e8f8"><path d="M12 4v16M4 12h16M8 8h8v8H8z" /></Stroke></span>
                  <i />
                </ToolButton>
                <ToolButton aria-label="Обновить"><Refresh /></ToolButton>
                <CheckLabel>
                  <Check type="checkbox" defaultChecked />
                  <span>Отображать подведомственные</span>
                </CheckLabel>
                <Counter>Показано 1-4 из 4</Counter>
              </PanelBar>
              <Table>
                <StaffCols />
                <thead>
                  <tr>
                    {columns.map((col) => (
                      <Th key={col.title}>
                        <ThLabel>{col.title}</ThLabel>
                        <Filter>
                          <input aria-label={col.title} />
                          {col.date && (
                            <>
                              <IconButton aria-label="Календарь"><Calendar /></IconButton>
                              <IconButton aria-label="Сегодня"><Calendar back /></IconButton>
                            </>
                          )}
                        </Filter>
                      </Th>
                    ))}
                    <Th />
                  </tr>
                </thead>
                <tbody>
                  {staff.map((row) => (
                    <StaffRow key={row[0]}>
                      {row.map((text, i) => (
                        <Cell key={i} $right={columns[i].right} $green={i === 4 && text !== "0,00"}>
                          {text}
                        </Cell>
                      ))}
                      <td />
                    </StaffRow>
                  ))}
                </tbody>
              </Table>
              <Totals>
                <Table>
                  <StaffCols />
                  <tbody>
                    <tr>
                      {totals.map((text, i) => (
                        <Cell key={i} $right={i < 6}>{text}</Cell>
                      ))}
                      <td />
                    </tr>
                  </tbody>
                </Table>
              </Totals>
            </Panel>
          </Panels>
        </Center>
        <SideStrip>
          <CollapseButton aria-label="Развернуть">«</CollapseButton>
        </SideStrip>
      </Workspace>
      <TaskBar>
        <StartButton>Пуск</StartButton>
        {tasks.map((task, i) => (
          <Task key={i} $state={task.state} $width={task.width}>
            {task.icon === "edit" ? <EditIcon /> : <WindowIcon />}
            {task.text}
          </Task>
        ))}
        <TaskOrg>ГБУЗ НСО</TaskOrg>
      </TaskBar>
      <BottomEdge />
      <Remote />
      <Toast>
        <svg width="21" height="21" viewBox="0 0 21 21" fill="none" stroke="#5b8fb9">
          <circle cx="10.500" cy="10.500" r="9.500" />
          <path d="M8 9h3v6M7.500 15.500h6M10 5.500h1.500" />
        </svg>
        <div>
          Удаление
          <p>
            Обнаружены неиспользуемые версии
            <br />
            программы. Нажмите здесь для удаления.
          </p>
        </div>
      </Toast>
      <Assistant>
        <AssistantHead>
          <LuChevronRight size={12} strokeWidth={4} />
          <AssistantLogo>
            <svg width="9" height="9" viewBox="0 0 9 9" fill="none" stroke="#fff">
              <path d="M.5.500h3v3h-3zM5.500 5.500h3v3h-3z" fill="#fff" />
              <path d="M5.500.500h3v3h-3zM.5 5.500h3v3h-3z" />
            </svg>
          </AssistantLogo>
          <strong>ассистент</strong>
          <LuMessageCircle size={10} />
          <ToolsIcon size={10} />
        </AssistantHead>
        <AssistantBody>
          К вам подключены
          <Peer>BO-KUZNETSOVA(146 613 83...</Peer>
        </AssistantBody>
      </Assistant>
    </Screen>
  );
};

export default App;
